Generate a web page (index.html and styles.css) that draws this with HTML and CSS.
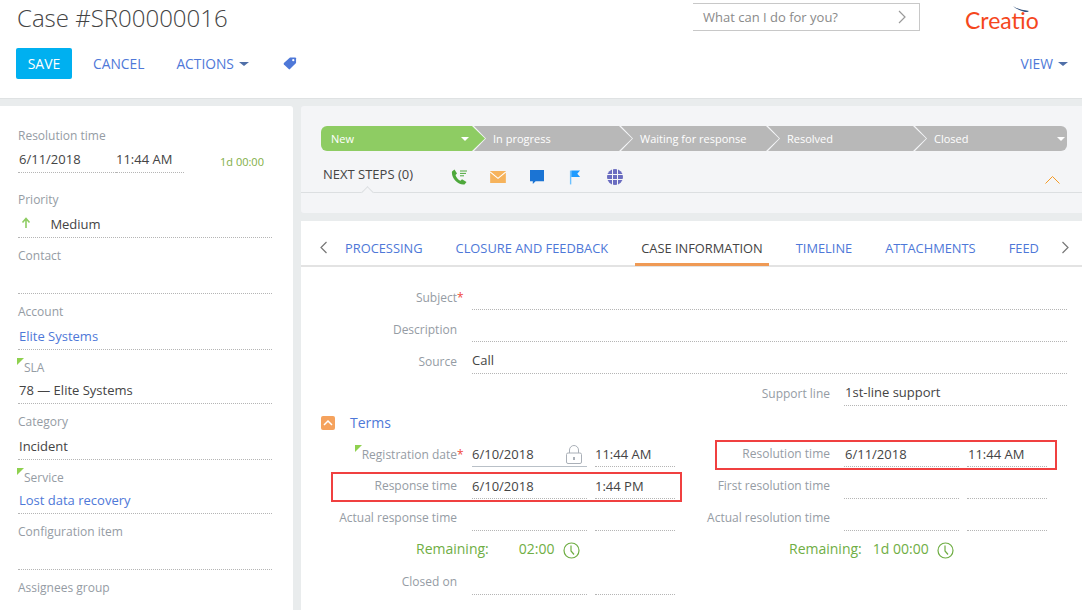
FILE: index.html
```html
<!DOCTYPE html>
<html lang="en">
<head>
    <meta charset="UTF-8">
    <meta name="viewport" content="width=device-width, initial-scale=1.0">
    <title>Case #SR00000016</title>
    <link rel="stylesheet" href="styles.css">
</head>
<body>
    <!-- Page header -->
    <header class="page-header">
        <div class="header-top">
            <h1 class="case-title">Case #SR00000016</h1>
            <div class="search-box">
                <span>What can I do for you?</span>
                <svg width="10" height="14" viewBox="0 0 10 14"><path d="M2 1l6 6-6 6" fill="none" stroke="#9a9a9a" stroke-width="1.2"/></svg>
            </div>
            <div class="logo">
                <svg class="logo-mark" width="16" height="7" viewBox="0 0 16 7"><path d="M0 0c4 3 9 4 16 5-1 1-2 1-4 1C8 5 3 3 0 0z" fill="#2f4f7a"/></svg>
                <span>Creatio</span>
            </div>
        </div>
        <div class="toolbar">
            <button class="btn-save" type="button">SAVE</button>
            <a class="tool-link">CANCEL</a>
            <a class="tool-link">ACTIONS<i class="caret"></i></a>
            <svg class="tag-icon" width="14" height="14" viewBox="0 0 15 14"><path d="M7.500 1H13a1 1 0 0 1 1 1v5L7.500 13.500a1 1 0 0 1-1.400 0L1 8.500a1 1 0 0 1 0-1.400z" fill="#4e78d8"/><circle cx="11" cy="4" r="1.200" fill="#fff"/></svg>
            <a class="tool-link view-link">VIEW<i class="caret"></i></a>
        </div>
    </header>

    <div class="content">
        <!-- Left column -->
        <aside class="sidebar">
            <div class="side-field side-field-first">
                <div class="side-label">Resolution time</div>
                <div class="side-dates">
                    <span class="side-date">6/11/2018</span>
                    <span class="side-time">11:44 AM</span>
                    <span class="side-remaining">1d 00:00</span>
                </div>
            </div>
            <div class="side-field">
                <div class="side-label">Priority</div>
                <div class="side-value">
                    <svg class="priority-arrow" width="10" height="12" viewBox="0 0 10 12"><path d="M5 11V2M1.500 5.500L5 1.500l3.500 4" fill="none" stroke="#8ecc63" stroke-width="1.600"/></svg>
                    Medium
                </div>
            </div>
            <div class="side-field"><div class="side-label">Contact</div><div class="side-value"></div></div>
            <div class="side-field"><div class="side-label">Account</div><div class="side-value link">Elite Systems</div></div>
            <div class="side-field side-field-flagged"><div class="side-label flagged">SLA</div><div class="side-value">78 — Elite Systems</div></div>
            <div class="side-field"><div class="side-label">Category</div><div class="side-value">Incident</div></div>
            <div class="side-field side-field-flagged"><div class="side-label flagged">Service</div><div class="side-value link">Lost data recovery</div></div>
            <div class="side-field"><div class="side-label">Configuration item</div><div class="side-value"></div></div>
            <div class="side-field"><div class="side-label">Assignees group</div></div>
        </aside>

        <main class="main-col">
            <!-- Case stages + next steps -->
            <section class="stage-panel">
                <div class="stages">
                    <div class="stage stage-active">New<i class="caret caret-white"></i></div>
                    <div class="stage">In progress</div>
                    <div class="stage">Waiting for response</div>
                    <div class="stage">Resolved</div>
                    <div class="stage stage-last">Closed<i class="caret caret-white"></i></div>
                </div>
                <div class="next-steps">
                    <span class="next-title">NEXT STEPS (0)</span>
                    <div class="next-icons">
                        <svg class="icon-call" width="16" height="16" viewBox="0 0 16 16"><path d="M1 2.500L3.500.5 6 4.500 4.500 6C5 8.500 7.500 11 9.500 11.800l1.500-1.500 4.500 2.700-2 2.500C7 16.500 0 9 1 2.500z" fill="#4ea83c"/><path d="M9 2h7M9 4.400h6M9 6.800h4" stroke="#4ea83c" stroke-width="1"/></svg>
                        <svg width="16" height="12" viewBox="0 0 17 13"><rect width="17" height="13" fill="#f6b35c"/><path d="M0 1l8.500 7L17 1" fill="none" stroke="#fff" stroke-width="1.200"/></svg>
                        <svg width="14" height="14" viewBox="0 0 15 15"><path d="M0 0h15v12H6l-3 3v-3H0z" fill="#1b74d4"/></svg>
                        <svg class="icon-flag" width="12" height="15" viewBox="0 0 13 15"><path d="M1 0h1.500v15H1z" fill="#6cc0ff"/><path d="M2.500 0H12L9 3.500 12 7H2.500z" fill="#1e9bff"/></svg>
                        <svg width="16" height="16" viewBox="0 0 16 16"><circle cx="8" cy="8" r="8" fill="#6a6cc0"/><path d="M0 5.500h16M0 10.500h16M5.500 0v16M10.500 0v16" stroke="#f4f5f7" stroke-width="1"/></svg>
                    </div>
                    <svg class="collapse-icon" width="15" height="8" viewBox="0 0 15 8"><path d="M.5 7.500l7-7 7 7" fill="none" stroke="#f59a23" stroke-width="1"/></svg>
                </div>
            </section>

            <section class="detail-panel">
                <nav class="tabs">
                    <svg class="tab-arrow" width="9" height="13" viewBox="0 0 9 13"><path d="M7.500 1L2 6.500 7.500 12" fill="none" stroke="#777" stroke-width="1.200"/></svg>
                    <a class="tab">PROCESSING</a>
                    <a class="tab">CLOSURE AND FEEDBACK</a>
                    <a class="tab tab-active">CASE INFORMATION</a>
                    <a class="tab">TIMELINE</a>
                    <a class="tab">ATTACHMENTS</a>
                    <a class="tab">FEED</a>
                    <svg class="tab-arrow tab-arrow-next" width="9" height="13" viewBox="0 0 9 13"><path d="M1.500 1L7 6.500 1.500 12" fill="none" stroke="#777" stroke-width="1.200"/></svg>
                </nav>

                <div class="form-area">
                    <div class="row"><label class="row-label">Subject<em>*</em></label><div class="cell cell-wide"></div></div>
                    <div class="row"><label class="row-label">Description</label><div class="cell cell-wide"></div></div>
                    <div class="row"><label class="row-label">Source</label><div class="cell cell-wide">Call</div></div>
                    <div class="row row-right"><label class="row-label">Support line</label><div class="cell cell-support">1st-line support</div></div>

                    <div class="group-head">
                        <span class="group-toggle"><svg width="10" height="6" viewBox="0 0 10 6"><path d="M1 5l4-4 4 4" fill="none" stroke="#fff" stroke-width="1.500"/></svg></span>
                        <span class="group-title">Terms</span>
                    </div>

                    <div class="terms">
                        <div class="terms-col">
                            <div class="row">
                                <label class="row-label flagged">Registration date<em>*</em></label>
                                <div class="cell cell-date cell-locked">6/10/2018
                                    <svg class="lock" width="16" height="19" viewBox="0 0 16 19"><path d="M3.500 8V5a4.500 4.500 0 0 1 9 0v3" fill="none" stroke="#aab0b8" stroke-width="1"/><rect x=".5" y="8" width="15" height="10.500" rx="1.500" fill="none" stroke="#aab0b8"/><rect x="7" y="12" width="2" height="3" fill="#aab0b8"/></svg>
                                </div>
                                <div class="cell cell-time">11:44 AM</div>
                            </div>
                            <div class="row row-marked">
                                <label class="row-label">Response time</label>
                                <div class="cell cell-date">6/10/2018</div>
                                <div class="cell cell-time">1:44 PM</div>
                            </div>
                            <div class="row">
                                <label class="row-label">Actual response time</label>
                                <div class="cell cell-date"></div>
                                <div class="cell cell-time"></div>
                            </div>
                            <div class="remaining remaining-left">
                                <span>Remaining:</span><span class="remaining-val">02:00</span>
                                <svg width="17" height="17" viewBox="0 0 17 17"><circle cx="8.500" cy="8.500" r="7.500" fill="none" stroke="#6fae44" stroke-width="1.200"/><path d="M8 3.500v5.500l3 3.500" fill="none" stroke="#6fae44" stroke-width="1.200"/></svg>
                            </div>
                            <div class="row">
                                <label class="row-label">Closed on</label>
                                <div class="cell cell-date"></div>
                                <div class="cell cell-time"></div>
                            </div>
                        </div>
                        <div class="terms-col terms-col-right">
                            <div class="row row-marked">
                                <label class="row-label">Resolution time</label>
                                <div class="cell cell-date">6/11/2018</div>
                                <div class="cell cell-time">11:44 AM</div>
                            </div>
                            <div class="row">
                                <label class="row-label">First resolution time</label>
                                <div class="cell cell-date"></div>
                                <div class="cell cell-time"></div>
                            </div>
                            <div class="row">
                                <label class="row-label">Actual resolution time</label>
                                <div class="cell cell-date"></div>
                                <div class="cell cell-time"></div>
                            </div>
                            <div class="remaining remaining-right">
                                <span>Remaining:</span><span class="remaining-val">1d 00:00</span>
                                <svg width="17" height="17" viewBox="0 0 17 17"><circle cx="8.500" cy="8.500" r="7.500" fill="none" stroke="#6fae44" stroke-width="1.200"/><path d="M8 3.500v5.500l3 3.500" fill="none" stroke="#6fae44" stroke-width="1.200"/></svg>
                            </div>
                        </div>
                    </div>
                </div>
            </section>
        </main>
    </div>
</body>
</html>
```

FILE: styles.css
```css
html, body {
    height: 100%;
}
body {
    margin: 0;
    height: 610px;
    overflow: hidden;
    background-color: #e9eced;
    font-family: "Open Sans", sans-serif;
    font-size: 13px;
    color: #444;
}
a {
    cursor: pointer;
}

/* header */
.page-header {
    height: 98px;
    background-color: #fff;
    border-bottom: 1px solid #dfe2e3;
}
.header-top {
    display: flex;
    height: 48px;
}
.case-title {
    margin: 0 0 0 17px;
    font-size: 24px;
    font-weight: 300;
    line-height: 35px;
    color: #444;
    flex: 1;
}
.search-box {
    display: flex;
    align-items: center;
    justify-content: space-between;
    box-sizing: border-box;
    width: 227px;
    height: 28px;
    margin-top: 3px;
    padding: 0 12px 0 10px;
    border: 1px solid #c8c8c8;
    border-left: none;
    color: #8a8a8a;
}
.logo {
    position: relative;
    width: 162px;
    padding-left: 45px;
    box-sizing: border-box;
    color: #f5471d;
    font-family: "Lato", sans-serif;
    font-size: 23px;
    line-height: 40px;
}
.logo-mark {
    position: absolute;
    left: 93px;
    top: 6px;
}
.toolbar {
    display: flex;
    align-items: center;
    height: 31px;
    padding: 0 14px 0 16px;
}
.btn-save {
    width: 56px;
    height: 31px;
    margin-right: 21px;
    border: none;
    border-radius: 2px;
    background-color: #00b0f0;
    color: #fff;
    font-family: inherit;
    font-size: 14px;
    cursor: pointer;
}
.tool-link {
    display: flex;
    align-items: center;
    margin-right: 32px;
    font-size: 13.800px;
    color: #4e78d8;
}
.caret {
    display: inline-block;
    width: 0;
    height: 0;
    margin-left: 5px;
    border-left: 5px solid transparent;
    border-right: 5px solid transparent;
    border-top: 4px solid #4f6fa8;
}
.caret-white {
    border-left-width: 4px;
    border-right-width: 4px;
    border-top-color: #fff;
}
.tag-icon {
    margin: -2px 0 0 2px;
}
.view-link {
    margin: 0 0 0 auto;
}

.content {
    display: flex;
    gap: 8px;
    padding-top: 7px;
}

/* left column */
.sidebar {
    flex: none;
    box-sizing: border-box;
    width: 293px;
    height: 504px;
    padding: 12px 21px 0 18px;
    background-color: #fff;
    border-top-right-radius: 3px;
}
.side-field {
    box-sizing: border-box;
    height: 56px;
    padding-top: 9px;
    border-bottom: 1px dotted #b5b5b5;
}
.side-field:last-child {
    border-bottom: none;
}
.side-field-first {
    margin-bottom: 8px;
    border-bottom: none;
}
.side-field-flagged {
    height: 54px;
}
.side-field-flagged .side-value {
    margin-top: 1px;
}
.side-label {
    position: relative;
    line-height: 18px;
    font-size: 12px;
    color: #959ca4;
}
.side-value {
    height: 24px;
    margin-top: 3px;
    padding-left: 1px;
    line-height: 24px;
}
.link {
    color: #4e78d8;
}
.priority-arrow {
    margin: 0 16px 0 2px;
}
.side-dates {
    display: flex;
    margin-top: 2px;
}
.side-date {
    width: 97px;
    height: 25px;
    padding-left: 1px;
    line-height: 24px;
    border-bottom: 1px dotted #b5b5b5;
}
.side-time {
    width: 68px;
    line-height: 24px;
    height: 25px;
    border-bottom: 1px dotted #b5b5b5;
}
.side-remaining {
    margin-left: 36px;
    padding-top: 7px;
    font-size: 11px;
    color: #7fae45;
}
.flagged {
    padding-left: 6px;
}
.flagged::before {
    content: "";
    position: absolute;
    left: -1px;
    top: -1px;
    width: 7px;
    height: 7px;
    background-color: #8fd14f;
    clip-path: polygon(0 0, 100% 0, 0 100%);
}

/* main column */
.main-col {
    flex: none;
    width: 781px;
    display: flex;
    flex-direction: column;
    gap: 8px;
}
.stage-panel {
    box-sizing: border-box;
    height: 107px;
    padding-top: 20px;
    background-color: #f4f5f7;
    border-radius: 3px 0 0 3px;
}
.stages {
    display: flex;
    height: 25px;
    margin: 0 15px 0 20px;
}
.stage {
    flex: none;
    box-sizing: border-box;
    width: 158px;
    display: flex;
    align-items: center;
    justify-content: space-between;
    margin-right: -11px;
    padding: 0 20px 0 19px;
    background-color: #b8b8b8;
    color: #fff;
    font-size: 11px;
    clip-path: polygon(0 0, calc(100% - 13px) 0, 100% 50%, calc(100% - 13px) 100%, 0 100%, 12px 50%);
}
.stage-active {
    width: 164px;
    padding: 0 16px 0 10px;
    background-color: #8ecc63;
    border-radius: 6px 0 0 6px;
    clip-path: polygon(0 0, calc(100% - 13px) 0, 100% 50%, calc(100% - 13px) 100%, 0 100%);
}
.stage-last {
    flex: 1;
    margin-right: 0;
    padding-right: 2px;
    border-radius: 0 6px 6px 0;
    clip-path: polygon(0 0, 100% 0, 100% 100%, 0 100%, 12px 50%);
}
.next-steps {
    position: relative;
    display: flex;
    align-items: center;
    height: 41px;
    padding-left: 22px;
    border-bottom: 1px solid #dcdfe1;
}
.next-steps::after {
    content: "";
    position: absolute;
    left: 62px;
    bottom: -5px;
    width: 9px;
    height: 9px;
    box-sizing: border-box;
    background-color: #f4f5f7;
    border-top: 1px solid #dcdfe1;
    border-left: 1px solid #dcdfe1;
    transform: rotate(45deg);
}
.next-title {
    width: 128px;
    font-size: 13px;
    margin-top: 5px;
}
.next-icons {
    display: flex;
    align-items: center;
    gap: 24px;
    margin-top: 11px;
}
.icon-call {
    margin-right: -1px;
}
.icon-flag {
    margin: 0 2px 0 1px;
}
.collapse-icon {
    position: absolute;
    right: 22px;
    bottom: 8px;
}

.detail-panel {
    flex: 1;
    background-color: #fff;
}
.tabs {
    display: flex;
    align-items: center;
    box-sizing: border-box;
    height: 46px;
    padding-left: 18px;
    border-bottom: 2px solid #e3e3e3;
}
.tab {
    display: flex;
    align-items: center;
    height: 46px;
    box-sizing: border-box;
    margin: 0 10.500px;
    padding: 10px 6px 0;
    color: #4e78d8;
    font-size: 12.850px;
    white-space: nowrap;
}
.tab:first-of-type {
    margin-left: 10px;
}
.tab-arrow {
    margin: 8px 1px 0 0;
}
.tab-arrow-next {
    margin: 8px 0 0 6px;
}
.tab-active {
    color: #444;
    border-bottom: 3px solid #ef9a55;
    padding-top: 13px;
}

/* form */
.form-area {
    padding-top: 14px;
}
.row {
    position: relative;
    display: flex;
    height: 32px;
}
.row-label {
    position: relative;
    flex: none;
    box-sizing: border-box;
    width: 156px;
    margin-right: 15px;
    text-align: right;
    line-height: 33px;
    font-size: 12px;
    color: #959ca4;
}
.terms .row-label {
    line-height: 32px;
}
.terms .row-label.flagged {
    line-height: 33px;
}
.row-label em {
    position: absolute;
    color: #f04a3a;
    font-style: normal;
}
.row-label.flagged::before {
    left: 54px;
    top: 7px;
}
.cell {
    flex: none;
    box-sizing: border-box;
    height: 29px;
    line-height: 32px;
    border-bottom: 1px dotted #b5b5b5;
}
.cell-wide {
    width: 595px;
    line-height: 30px;
}
.row-right {
    justify-content: flex-end;
    margin-right: 15px;
}
.row-right .row-label {
    width: auto;
    margin-right: 14px;
}
.cell-support {
    width: 223px;
    padding-left: 1px;
    line-height: 30px;
}
.cell-date {
    position: relative;
    width: 115px;
    margin-right: 8px;
}
.cell-time {
    width: 80px;
}
.cell-locked {
    border-bottom: 1px solid #b9c0c7;
}
.lock {
    position: absolute;
    right: 5px;
    top: 7px;
}
.group-head {
    display: flex;
    align-items: center;
    box-sizing: border-box;
    height: 29px;
    padding: 0 0 2px 20px;
}
.group-toggle {
    display: flex;
    align-items: center;
    justify-content: center;
    width: 14px;
    height: 14px;
    margin-right: 15px;
    border-radius: 2px;
    background-color: #f5a25d;
}
.group-title {
    color: #4e78d8;
    font-size: 14px;
}
.terms {
    display: flex;
}
.terms-col {
    flex: none;
    width: 381px;
}
.terms-col-right {
    margin-left: -8px;
}
.terms-col-right .row-label {
    margin-right: 14px;
}
.terms-col-right .cell-date,
.terms-col-right .cell-time {
    padding-left: 1px;
}
.row-marked::after {
    content: "";
    position: absolute;
    top: 2px;
    bottom: 0;
    left: 30px;
    width: 351px;
    box-sizing: border-box;
    border: 2px solid #f04040;
}
.terms-col-right .row-marked::after {
    left: 41px;
    width: 342px;
}
.remaining {
    display: flex;
    align-items: center;
    height: 32px;
    font-size: 14px;
    color: #6fae44;
}
.remaining span {
    margin-top: -3px;
}
.remaining-left {
    padding-left: 115px;
}
.remaining .remaining-val {
    margin: -3px 9px 0 30px;
}
.remaining-right {
    padding-left: 115px;
}
.remaining-right .remaining-val {
    margin: -3px 8px 0 11px;
}
```
